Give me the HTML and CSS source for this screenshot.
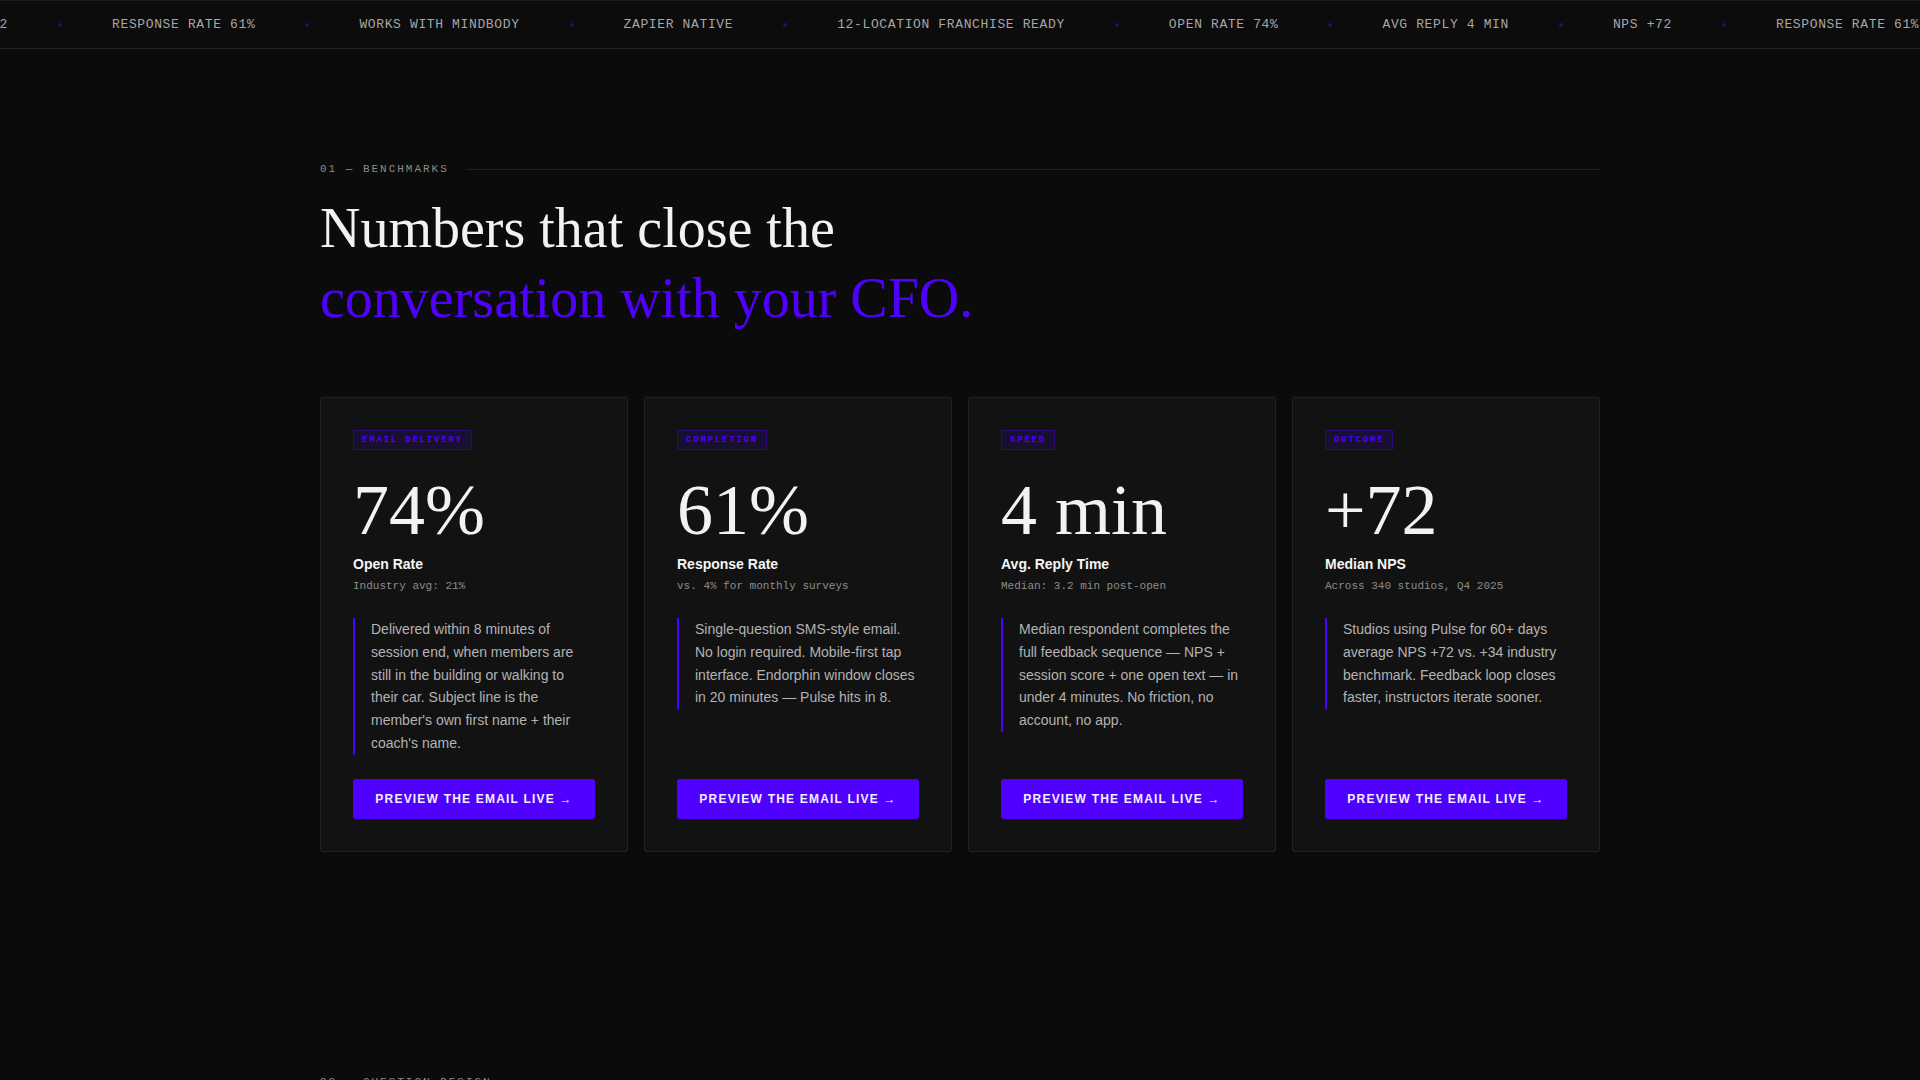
FILE: index.html
```html
<!DOCTYPE html>
<html lang="en">
<head>
<meta charset="utf-8">
<title>Benchmarks</title>
<link rel="stylesheet" href="styles.css">
</head>
<body>
<div class="ticker">
  <div class="ticker-track">
    <span class="tick">NPS +72</span><span class="dot"></span>
    <span class="tick">RESPONSE RATE 61%</span><span class="dot"></span>
    <span class="tick">WORKS WITH MINDBODY</span><span class="dot"></span>
    <span class="tick">ZAPIER NATIVE</span><span class="dot"></span>
    <span class="tick">12-LOCATION FRANCHISE READY</span><span class="dot"></span>
    <span class="tick">OPEN RATE 74%</span><span class="dot"></span>
    <span class="tick">AVG REPLY 4 MIN</span><span class="dot"></span>
    <span class="tick">NPS +72</span><span class="dot"></span>
    <span class="tick">RESPONSE RATE 61%</span><span class="dot"></span>
    <span class="tick">WORKS WITH MINDBODY</span><span class="dot"></span>
    <span class="tick">ZAPIER NATIVE</span><span class="dot"></span>
  </div>
</div>

<section class="section">
  <div class="eyebrow"><span class="eyebrow-text">01 — BENCHMARKS</span><span class="eyebrow-line"></span></div>
  <h2 class="headline">Numbers that close the<br><span class="accent">conversation with your CFO.</span></h2>

  <div class="cards">
    <article class="card">
      <span class="tag">EMAIL DELIVERY</span>
      <div class="stat">74%</div>
      <div class="stat-title">Open Rate</div>
      <div class="stat-sub">Industry avg: 21%</div>
      <p class="desc">Delivered within 8 minutes of session end, when members are still in the building or walking to their car. Subject line is the member's own first name + their coach's name.</p>
      <a class="btn" href="#">PREVIEW THE EMAIL LIVE →</a>
    </article>
    <article class="card">
      <span class="tag">COMPLETION</span>
      <div class="stat">61%</div>
      <div class="stat-title">Response Rate</div>
      <div class="stat-sub">vs. 4% for monthly surveys</div>
      <p class="desc">Single-question SMS-style email. No login required. Mobile-first tap interface. Endorphin window closes in 20 minutes — Pulse hits in 8.</p>
      <a class="btn" href="#">PREVIEW THE EMAIL LIVE →</a>
    </article>
    <article class="card">
      <span class="tag">SPEED</span>
      <div class="stat">4 min</div>
      <div class="stat-title">Avg. Reply Time</div>
      <div class="stat-sub">Median: 3.2 min post-open</div>
      <p class="desc">Median respondent completes the full feedback sequence — NPS + session score + one open text — in under 4 minutes. No friction, no account, no app.</p>
      <a class="btn" href="#">PREVIEW THE EMAIL LIVE →</a>
    </article>
    <article class="card">
      <span class="tag">OUTCOME</span>
      <div class="stat">+72</div>
      <div class="stat-title">Median NPS</div>
      <div class="stat-sub">Across 340 studios, Q4 2025</div>
      <p class="desc">Studios using Pulse for 60+ days average NPS +72 vs. +34 industry benchmark. Feedback loop closes faster, instructors iterate sooner.</p>
      <a class="btn" href="#">PREVIEW THE EMAIL LIVE →</a>
    </article>
  </div>
</section>

<section class="section">
  <div class="eyebrow"><span class="eyebrow-text">02 — QUESTION DESIGN</span><span class="eyebrow-line"></span></div>
</section>
</body>
</html>
```

FILE: styles.css
```css
* { box-sizing: border-box; }

html, body {
  margin: 0;
  padding: 0;
  background: #0b0b0b;
  color: #f2f2f2;
  font-family: "Liberation Sans", Arial, sans-serif;
}

.ticker {
  border-top: 1px solid #1c1c1c;
  border-bottom: 1px solid #222;
  background: #0c0c0c;
  height: 49px;
  overflow: hidden;
  white-space: nowrap;
}

.ticker-track {
  display: flex;
  align-items: center;
  gap: 50px;
  height: 47px;
  transform: translateX(-51px);
}

.tick {
  font-family: "Liberation Mono", "Courier New", monospace;
  font-size: 13px;
  letter-spacing: 0.63px;
  color: #a6a6a6;
  line-height: 16px;
  flex: none;
}

.dot {
  width: 4px;
  height: 4px;
  border-radius: 50%;
  background: #20145a;
  flex: none;
}

.section {
  width: 1280px;
  margin: 0 auto;
  padding: 112px 0 110px;
}

.eyebrow {
  display: flex;
  align-items: center;
  gap: 18px;
  margin-bottom: 16px;
}

.eyebrow-text {
  font-family: "Liberation Mono", "Courier New", monospace;
  font-size: 11px;
  line-height: 16px;
  letter-spacing: 0.18em;
  color: #8c8c8c;
  flex: none;
}

.eyebrow-line {
  flex: 1;
  height: 1px;
  background: #242424;
}

.headline {
  margin: 0;
  font-family: "Liberation Serif", "Times New Roman", serif;
  font-weight: 400;
  font-size: 56px;
  line-height: 70px;
  color: #f2f2f2;
}

.accent { color: #5000ff; }

.cards {
  margin-top: 64px;
  display: grid;
  grid-template-columns: repeat(4, 1fr);
  gap: 16px;
}

.card {
  display: flex;
  flex-direction: column;
  align-items: flex-start;
  background: #121212;
  border: 1px solid #222;
  border-radius: 2px;
  padding: 32px;
}

.tag {
  display: inline-block;
  font-family: "Liberation Mono", "Courier New", monospace;
  font-size: 9px;
  line-height: 12px;
  font-weight: 700;
  letter-spacing: 0.2em;
  color: #5000ff;
  background: rgba(80, 0, 255, 0.13);
  border: 1px solid rgba(80, 0, 255, 0.35);
  padding: 3px 8px;
}

.stat {
  margin-top: 24px;
  font-family: "Liberation Serif", "Times New Roman", serif;
  font-size: 72px;
  line-height: 72px;
  color: #f2f2f2;
}

.stat-title {
  margin-top: 9px;
  font-size: 14px;
  line-height: 18px;
  font-weight: 700;
  color: #f5f5f5;
}

.stat-sub {
  margin-top: 6px;
  font-family: "Liberation Mono", "Courier New", monospace;
  font-size: 11px;
  line-height: 15px;
  color: #8c8c8c;
}

.desc {
  margin: 24px 0 24px;
  border-left: 2px solid #5000ff;
  padding-left: 16px;
  font-size: 14px;
  line-height: 22.75px;
  color: #b3b3b3;
}

.btn {
  margin-top: auto;
  align-self: stretch;
  display: block;
  text-align: center;
  background: #5000ff;
  color: #f4f0ff;
  text-decoration: none;
  font-size: 12px;
  line-height: 14px;
  font-weight: 700;
  letter-spacing: 0.1em;
  padding: 13px 0;
  border-radius: 2px;
}
```
